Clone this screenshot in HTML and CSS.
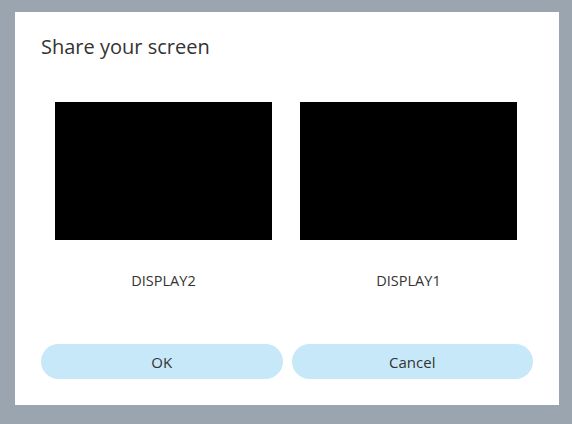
FILE: index.html
```html
<!DOCTYPE html>
<html>
<head>
<meta charset="utf-8">
<link rel="stylesheet" href="styles.css">
</head>
<body>
<div class="dialog">
  <h1 class="title">Share your screen</h1>
  <div class="screens">
    <div class="screen">
      <div class="preview"></div>
      <div class="label">DISPLAY2</div>
    </div>
    <div class="screen">
      <div class="preview"></div>
      <div class="label">DISPLAY1</div>
    </div>
  </div>
  <div class="actions">
    <button class="btn">OK</button>
    <button class="btn">Cancel</button>
  </div>
</div>
</body>
</html>
```
FILE: styles.css
```css
html, body {
  margin: 0;
  padding: 0;
}
body {
  background: #9ba5af;
  width: 572px;
  height: 424px;
  padding: 12px 0 0 15px;
  box-sizing: border-box;
  font-family: "Open Sans", "Noto Sans", sans-serif;
  color: #333;
}
.dialog {
  width: 544px;
  height: 393px;
  background: #fff;
  box-sizing: border-box;
  padding: 22px 26px 0 26px;
  display: flex;
  flex-direction: column;
}
.title {
  margin: 0;
  font-size: 20px;
  font-weight: 400;
  line-height: 26px;
  color: #333;
}
.screens {
  display: flex;
  justify-content: center;
  gap: 28px;
  margin-top: 42px;
  padding-right: 2px;
}
.screen {
  display: flex;
  flex-direction: column;
  align-items: center;
}
.preview {
  width: 217px;
  height: 138px;
  background: #000;
}
.label {
  margin-top: 31px;
  font-size: 14.5px;
  line-height: 20px;
  color: #333;
}
.actions {
  display: grid;
  grid-template-columns: 1fr 1fr;
  gap: 9px;
  margin-top: 53px;
}
.btn {
  height: 35px;
  border: none;
  border-radius: 18px;
  background: #c7e8f8;
  font-family: inherit;
  font-size: 15px;
  color: #333;
  padding: 0;
}
```
